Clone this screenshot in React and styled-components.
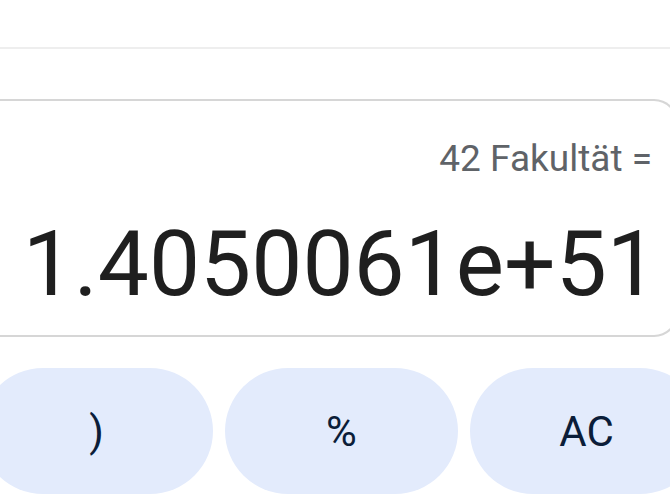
import React from 'react';
import styled, { createGlobalStyle } from 'styled-components';

const GlobalStyle = createGlobalStyle`
	html, body {
		margin: 0;
		padding: 0;
		background: #fff;
		overflow: hidden;
	}
	body {
		font-family: Roboto, "Open Sans", sans-serif;
	}
`;

const Screen = styled.div`
	width: 670px;
	height: 502px;
	overflow: hidden;
	background: #fff;
`;

const TopBar = styled.div`
	height: 47px;
	border-bottom: 2px solid #eeeeee;
`;

const Display = styled.div`
	margin: 50px -8px 0 -30px;
	height: 234px;
	border: 2px solid #d6d6d6;
	border-left: none;
	border-radius: 0 24px 24px 0;
	display: flex;
	flex-direction: column;
	align-items: flex-end;
	padding-right: 24px;
`;

const Expression = styled.div`
	margin-top: 38px;
	font-size: 37px;
	color: #5f6368;
	line-height: 40px;
`;

const Result = styled.div`
	margin-top: 35px;
	margin-right: -6px;
	font-size: 91px;
	line-height: 100px;
	color: #1f1f1f;
`;

const Keys = styled.div`
	margin: 31px 0 0 -20px;
	display: grid;
	grid-template-columns: repeat(3, 233px);
	gap: 12px;
`;

const Key = styled.button`
	height: 126px;
	border: none;
	border-radius: 63px;
	background: #e3ebfc;
	color: #0b1d39;
	font-family: Roboto, "Open Sans", sans-serif;
	font-size: 42px;
	display: flex;
	align-items: center;
	justify-content: center;
	padding: 0;
`;

export default function App() {
	const keys = [')', '%', 'AC'];
	return (
		<Screen>
			<GlobalStyle />
			<TopBar />
			<Display>
				<Expression>42 Fakultät =</Expression>
				<Result>1.4050061e+51</Result>
			</Display>
			<Keys>
				{keys.map(k => <Key key={k}>{k}</Key>)}
			</Keys>
		</Screen>
	);
}
